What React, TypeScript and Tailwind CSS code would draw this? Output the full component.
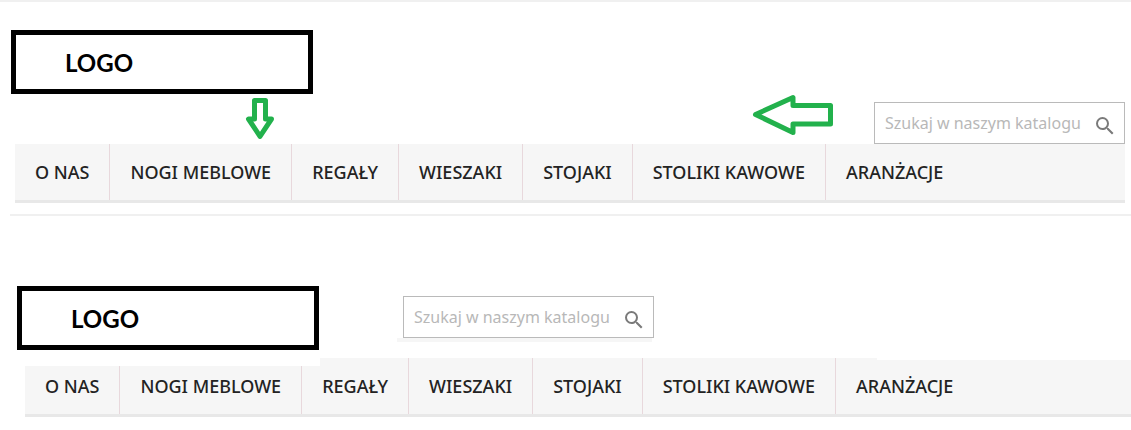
import { MdSearch } from "react-icons/md";

const links = [
  "O nas",
  "Nogi meblowe",
  "Regały",
  "Wieszaki",
  "Stojaki",
  "Stoliki kawowe",
  "Aranżacje",
];

function Logo() {
  return (
    <div className="flex h-16 w-[302px] items-center border-5 border-black bg-white pl-[49px] pt-0.5 font-[Lato,sans-serif] text-2xl font-bold text-black">
      LOGO
    </div>
  );
}

function Search() {
  return (
    <form className="flex h-[42px] w-[251px] items-center border border-[#bababa] bg-white pl-2.5 pr-[7px]">
      <input
        type="text"
        aria-label="Szukaj"
        placeholder="Szukaj w naszym katalogu"
        className="min-w-0 flex-1 text-base text-[#232323] outline-none placeholder:text-[#b8b8b8]"
      />
      <button type="button" aria-label="Szukaj" className="mt-1.5 text-[#7a7a7a]">
        <MdSearch size={24} />
      </button>
    </form>
  );
}

function Menu() {
  return (
    <ul className="flex h-[59px] border-b-3 border-[#e8e8e8] bg-[#f6f6f6]">
      {links.map((link) => (
        <li
          key={link}
          className="flex items-center border-r border-[#e8d8dc] px-5 last:border-r-0"
        >
          <a
            href="#"
            className="whitespace-nowrap text-lg font-medium uppercase text-[#232323]"
          >
            {link}
          </a>
        </li>
      ))}
    </ul>
  );
}

export default function App() {
  return (
    <div className="overflow-hidden bg-white font-['Noto_Sans',sans-serif]">
      {/* Before */}
      <header className="border-t-2 border-[#f0f0f0] pt-7">
        <div className="flex items-end justify-between pl-[11px] pr-1.5">
          <div>
            <Logo />
            <svg
              width="30"
              height="42"
              viewBox="0 0 30 42"
              className="mb-1 ml-[234px] mt-1"
              fill="none"
              stroke="#22b14c"
              strokeWidth="5"
              strokeLinejoin="round"
            >
              <path d="M9.5 2.5h11v18.500h6L15 38.300 3.500 21h6z" />
            </svg>
          </div>
          <div className="flex items-end gap-10">
            <svg
              width="82"
              height="44"
              viewBox="0 0 82 44"
              className="mb-1.5"
              fill="none"
              stroke="#22b14c"
              strokeWidth="5"
              strokeLinejoin="round"
            >
              <path d="M3.5 20.5L41 3.500v8h37.500v18.500H41v8.500z" />
            </svg>
            <Search />
          </div>
        </div>
        <nav className="ml-[15px] mr-1.5">
          <Menu />
        </nav>
      </header>

      {/* After */}
      <header className="ml-2.5 mt-[11px] border-t-2 border-[#f0f0f0] pt-[70px]">
        <div className="flex items-start gap-[84px] pl-[7px]">
          <Logo />
          <div className="relative mt-2.5">
            <div className="absolute -left-1.5 right-0.5 top-[42px] h-1 bg-[#f6f6f6]" />
            <Search />
          </div>
        </div>
        <nav className="relative ml-[15px] mt-2">
          <Menu />
          <div className="absolute left-0 top-0 h-2 w-[295px] bg-white" />
          <div className="absolute left-[852px] right-0 top-0 h-0.5 bg-white" />
        </nav>
      </header>
    </div>
  );
}
